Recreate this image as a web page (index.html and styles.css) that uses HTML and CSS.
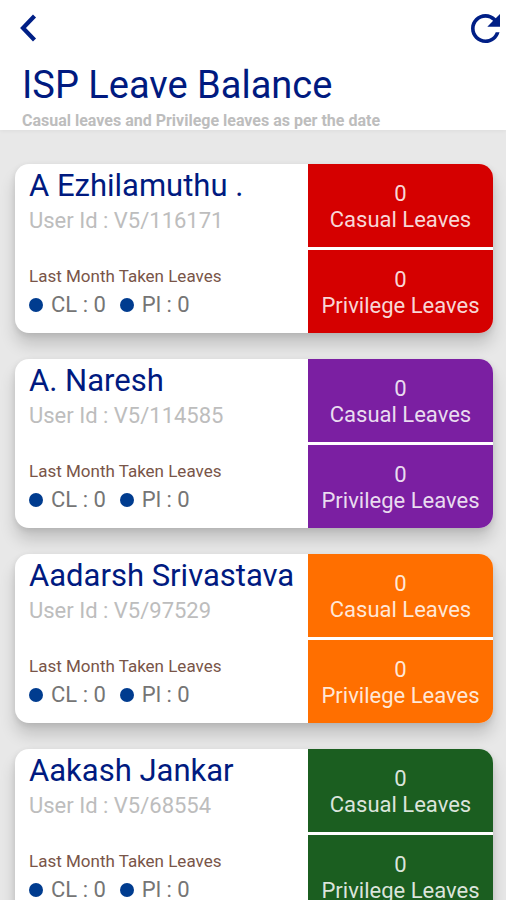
FILE: index.html
```html
<!DOCTYPE html>
<html lang="en">
<head>
    <meta charset="UTF-8">
    <meta name="viewport" content="width=device-width, initial-scale=1">
    <title>ISP Leave Balance</title>
    <link rel="stylesheet" href="styles.css">
</head>
<body>
    <header class="header">
        <div class="toolbar">
            <button class="icon-btn" aria-label="Back">
                <svg width="18" height="28" viewBox="0 0 18 28"><path d="M15.500 2 L4 14 L15.500 26" fill="none" stroke="currentColor" stroke-width="4.200"/></svg>
            </button>
            <button class="icon-btn" aria-label="Refresh">
                <svg width="29" height="29" viewBox="4 4 16 16">
                    <path d="M17.650 6.350C16.200 4.900 14.210 4 12 4c-4.420 0-7.990 3.580-7.990 8s3.570 8 7.990 8c3.730 0 6.840-2.550 7.730-6h-2.080c-.820 2.330-3.040 4-5.650 4-3.310 0-6-2.690-6-6s2.690-6 6-6c1.660 0 3.140.690 4.220 1.780L13 11h7V4l-2.350 2.350z" fill="currentColor"/>
                </svg>
            </button>
        </div>
        <h1>ISP Leave Balance</h1>
        <p class="subtitle">Casual leaves and Privilege leaves as per the date</p>
    </header>

    <main class="leave-list">
        <article class="card">
            <div class="card-info">
                <h2>A Ezhilamuthu .</h2>
                <p class="user-id">User Id : V5/116171</p>
                <p class="taken-title">Last Month Taken Leaves</p>
                <div class="taken">
                    <span class="taken-item">CL : 0</span>
                    <span class="taken-item">Pl : 0</span>
                </div>
            </div>
            <div class="balances red">
                <div class="balance"><span>0</span><span>Casual Leaves</span></div>
                <div class="balance"><span>0</span><span>Privilege Leaves</span></div>
            </div>
        </article>

        <article class="card">
            <div class="card-info">
                <h2>A. Naresh</h2>
                <p class="user-id">User Id : V5/114585</p>
                <p class="taken-title">Last Month Taken Leaves</p>
                <div class="taken">
                    <span class="taken-item">CL : 0</span>
                    <span class="taken-item">Pl : 0</span>
                </div>
            </div>
            <div class="balances purple">
                <div class="balance"><span>0</span><span>Casual Leaves</span></div>
                <div class="balance"><span>0</span><span>Privilege Leaves</span></div>
            </div>
        </article>

        <article class="card">
            <div class="card-info">
                <h2>Aadarsh Srivastava</h2>
                <p class="user-id">User Id : V5/97529</p>
                <p class="taken-title">Last Month Taken Leaves</p>
                <div class="taken">
                    <span class="taken-item">CL : 0</span>
                    <span class="taken-item">Pl : 0</span>
                </div>
            </div>
            <div class="balances orange">
                <div class="balance"><span>0</span><span>Casual Leaves</span></div>
                <div class="balance"><span>0</span><span>Privilege Leaves</span></div>
            </div>
        </article>

        <article class="card">
            <div class="card-info">
                <h2>Aakash Jankar</h2>
                <p class="user-id">User Id : V5/68554</p>
                <p class="taken-title">Last Month Taken Leaves</p>
                <div class="taken">
                    <span class="taken-item">CL : 0</span>
                    <span class="taken-item">Pl : 0</span>
                </div>
            </div>
            <div class="balances green">
                <div class="balance"><span>0</span><span>Casual Leaves</span></div>
                <div class="balance"><span>0</span><span>Privilege Leaves</span></div>
            </div>
        </article>
    </main>
</body>
</html>
```

FILE: styles.css
```css
* {
    box-sizing: border-box;
}

body {
    margin: 0;
    height: 100vh;
    display: flex;
    flex-direction: column;
    font-family: Roboto, sans-serif;
    background-color: #e8e8e8;
}

h1, h2, p {
    margin: 0;
    font-weight: 400;
}

.header {
    flex: none;
    padding: 12px 6px 0 22px;
    background-color: #fff;
    box-shadow: 0 1px 4px rgba(0,0,0,0.05);
}

.toolbar {
    display: flex;
    justify-content: space-between;
    align-items: center;
    height: 32px;
    margin-left: -3px;
}

.icon-btn {
    display: flex;
    padding: 0;
    border: none;
    background: none;
    color: #001f86;
    cursor: pointer;
}

h1 {
    margin-top: 18px;
    font-size: 38px;
    line-height: 46px;
    color: #001a80;
}

.subtitle {
    margin-top: 4px;
    font-size: 16px;
    line-height: 18px;
    font-weight: 700;
    color: #bdbdbd;
}

.leave-list {
    flex: 1;
    min-height: 0;
    overflow-y: auto;
    scrollbar-width: none;
    display: flex;
    flex-direction: column;
    gap: 26px;
    padding: 34px 13px 26px 15px;
}

.card {
    flex: none;
    display: flex;
    border-radius: 14px;
    background-color: #fff;
    box-shadow: 0 12px 16px rgba(0,0,0,0.16), 0 2px 6px rgba(0,0,0,0.1);
}

.card-info {
    flex: 1;
    min-width: 0;
    padding: 4px 0 0 14px;
}

.card h2 {
    font-size: 31px;
    line-height: 36px;
    color: #001a80;
    white-space: nowrap;
}

.user-id {
    margin-top: 4px;
    font-size: 22px;
    line-height: 26px;
    color: #bdbdbd;
}

.taken-title {
    margin-top: 32px;
    font-size: 17px;
    line-height: 20px;
    color: #795548;
}

.taken {
    display: flex;
    gap: 14px;
    margin-top: 6px;
}

.taken-item {
    display: flex;
    align-items: center;
    gap: 8px;
    font-size: 22px;
    line-height: 26px;
    color: #757575;
}

.taken-item::before {
    content: "";
    width: 14px;
    height: 14px;
    border-radius: 50%;
    background-color: #003c8f;
}

.balances {
    flex: none;
    display: flex;
    flex-direction: column;
    gap: 3px;
    width: 185px;
}

.balance {
    display: flex;
    flex-direction: column;
    align-items: center;
    justify-content: center;
    height: 83px;
    padding-top: 2px;
    font-size: 22px;
    line-height: 26px;
    color: rgba(255,255,255,0.85);
}

.balance:first-child {
    border-top-right-radius: 14px;
}

.balance:last-child {
    border-bottom-right-radius: 14px;
}

.red .balance { background-color: #d50000; }
.purple .balance { background-color: #7b1fa2; }
.orange .balance { background-color: #ff6f00; }
.green .balance { background-color: #1b5e20; }
```
